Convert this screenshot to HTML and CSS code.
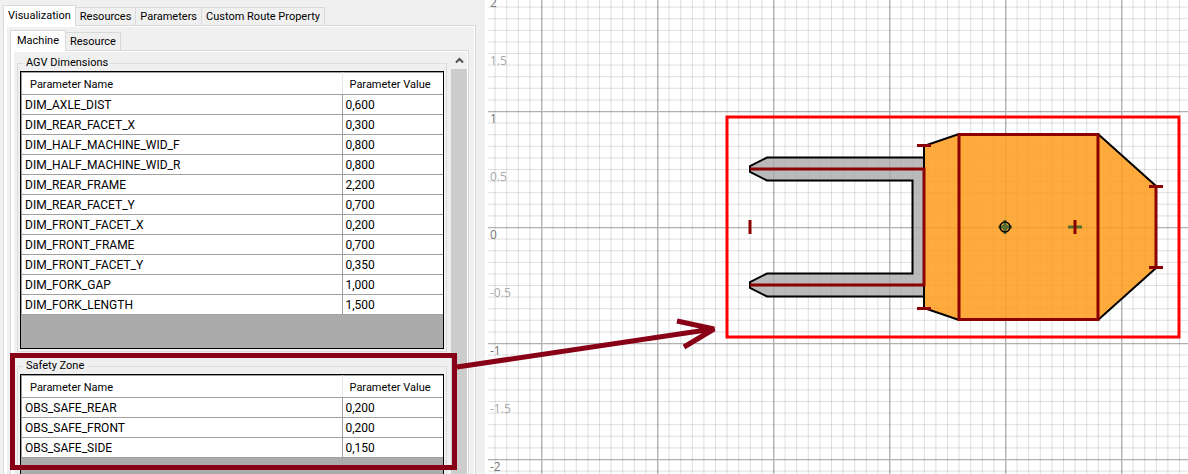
FILE: index.html
```html
<!DOCTYPE html>
<html lang="en">
<head>
<meta charset="utf-8">
<title>AGV parameters</title>
<link rel="stylesheet" href="styles.css">
</head>
<body>
<main class="app">
  <section class="panel">
    <div class="tabs" role="tablist">
      <button class="tab active" role="tab" aria-selected="true">Visualization</button>
      <button class="tab" role="tab">Resources</button>
      <button class="tab" role="tab">Parameters</button>
      <button class="tab" role="tab">Custom Route Property</button>
    </div>
    <div class="page">
      <div class="tabs sub" role="tablist">
        <button class="tab active" role="tab" aria-selected="true">Machine</button>
        <button class="tab" role="tab">Resource</button>
      </div>
      <div class="page inner">
        <div class="groups">
          <fieldset class="group">
            <legend>AGV Dimensions</legend>
            <div class="grid">
              <table>
                <thead><tr><th>Parameter Name</th><th class="val">Parameter Value</th></tr></thead>
                <tbody>
                  <tr><td>DIM_AXLE_DIST</td><td>0,600</td></tr>
                  <tr><td>DIM_REAR_FACET_X</td><td>0,300</td></tr>
                  <tr><td>DIM_HALF_MACHINE_WID_F</td><td>0,800</td></tr>
                  <tr><td>DIM_HALF_MACHINE_WID_R</td><td>0,800</td></tr>
                  <tr><td>DIM_REAR_FRAME</td><td>2,200</td></tr>
                  <tr><td>DIM_REAR_FACET_Y</td><td>0,700</td></tr>
                  <tr><td>DIM_FRONT_FACET_X</td><td>0,200</td></tr>
                  <tr><td>DIM_FRONT_FRAME</td><td>0,700</td></tr>
                  <tr><td>DIM_FRONT_FACET_Y</td><td>0,350</td></tr>
                  <tr><td>DIM_FORK_GAP</td><td>1,000</td></tr>
                  <tr><td>DIM_FORK_LENGTH</td><td>1,500</td></tr>
                </tbody>
              </table>
            </div>
          </fieldset>
          <fieldset class="group">
            <legend>Safety Zone</legend>
            <div class="grid">
              <table>
                <thead><tr><th>Parameter Name</th><th class="val">Parameter Value</th></tr></thead>
                <tbody>
                  <tr><td>OBS_SAFE_REAR</td><td>0,200</td></tr>
                  <tr><td>OBS_SAFE_FRONT</td><td>0,200</td></tr>
                  <tr><td>OBS_SAFE_SIDE</td><td>0,150</td></tr>
                </tbody>
              </table>
            </div>
          </fieldset>
        </div>
        <div class="scrollbar">
          <button class="up" aria-label="Scroll up"><svg width="9" height="7" viewBox="0 0 9 7"><path d="M1 5.500 4.500 2 8 5.500" fill="none" stroke="#505050" stroke-width="2"/></svg></button>
          <div class="thumb"></div>
        </div>
      </div>
    </div>
  </section>
  <section class="view">
    <svg class="plot" role="img" aria-label="Machine outline">
      <defs>
        <pattern id="mesh" x="53" y="111" width="116" height="116" patternUnits="userSpaceOnUse">
          <path d="M12.100 0V116M23.700 0V116M35.300 0V116M46.900 0V116M58.500 0V116M70.100 0V116M81.700 0V116M93.300 0V116M104.900 0V116M0 12.100H116M0 23.700H116M0 35.300H116M0 46.900H116M0 58.500H116M0 70.100H116M0 81.700H116M0 93.300H116M0 104.900H116" stroke="#000" stroke-opacity=".12"/>
          <path d="M.7 0V116M0 .5H116" stroke="#000" stroke-opacity=".3" stroke-width="1.400"/>
        </pattern>
      </defs>
      <rect width="100%" height="100%" fill="url(#mesh)"/>
      <g class="scale">
        <text x="2" y="7" class="major">2</text>
        <text x="2" y="65">1.5</text>
        <text x="2" y="123" class="major">1</text>
        <text x="2" y="181">0.5</text>
        <text x="2" y="239" class="major">0</text>
        <text x="2" y="297">-0.5</text>
        <text x="2" y="355" class="major">-1</text>
        <text x="2" y="413">-1.5</text>
        <text x="2" y="471" class="major">-2</text>
      </g>
      <g transform="translate(517 227)" fill="none">
        <path d="M-81-69.500H-238L-255-61V-55L-238-46.500H-92.500V46.500H-238L-255 55V61L-238 69.500H-81Z" fill="#a9a9a9" fill-opacity=".8" stroke="#000" stroke-width="2"/>
        <path d="M-81-81-46-93H93L151-41V41L93 93H-46L-81 81Z" fill="#ff9b1a" fill-opacity=".85" stroke="#000" stroke-width="2"/>
        <g stroke="#8b0000" stroke-width="3">
          <path d="M-255-58H-81V58H-255"/>
          <path d="M-46-92.500H93V92.500H-46Z"/>
          <path d="M151-41V41M144-40.500H158M144 40.500H158M-88-81.500H-74M-88 81.500H-74M-255-7V7"/>
        </g>
        <path d="M63 0H77M-6.500 0H7M0-7V7" stroke="#556b2f" stroke-width="3"/>
        <circle cx="0" cy="0" r="3" fill="#556b2f"/>
        <circle cx="0" cy="0" r="5" stroke="#000" stroke-width="1.500"/>
        <path d="M70-7V7" stroke="#8b0000" stroke-width="3"/>
        <rect x="-278" y="-110" width="452" height="220" stroke="#f00" stroke-width="3"/>
      </g>
    </svg>
  </section>
  <svg class="callout" aria-hidden="true">
    <g fill="none" stroke="#880015" stroke-width="5">
      <rect x="12.500" y="355.500" width="442" height="112"/>
      <path stroke-linejoin="bevel" d="M457 367 713 329M677 321 714 329 684 347"/>
    </g>
  </svg>
</main>
</body>
</html>
```
FILE: styles.css
```css
* { box-sizing: border-box; }
body {
  margin: 0;
  font: 11px/16px Roboto, sans-serif;
  color: #000;
  background: #fff;
}
.app { position: relative; display: flex; height: 100vh; overflow: hidden; }
.panel {
  flex: 0 0 485px;
  display: flex;
  flex-direction: column;
  padding: 5px 9px 0 3px;
  background: #f0f0f0;
}
.tabs { display: flex; align-items: flex-end; flex: none; }
.tab {
  height: 18px;
  padding: 1px 4px 0;
  border: 1px solid #d9d9d9;
  border-bottom: 0;
  border-left: 0;
  background: #f0f0f0;
  font: inherit;
  color: inherit;
  white-space: nowrap;
}
.tab.active {
  height: 21px;
  padding: 0 4px 1px;
  border-left: 1px solid #d9d9d9;
  background: #fff;
  margin-bottom: -1px;
  z-index: 1;
}
.sub .tab.active { padding: 0 6px 1px; }
.page {
  flex: 1;
  min-height: 0;
  display: flex;
  flex-direction: column;
  padding: 4px 6px 0 6px;
  border: 1px solid #d9d9d9;
  border-bottom: 0;
  background: #f0f0f0;
  box-shadow: inset 3px 0 #fff, inset -1px 1px #fff;
}
.page.inner { flex-direction: row; padding: 1px 1px 0 6px; }
.groups { flex: 1; min-width: 0; padding-top: 3px; }
.group {
  min-width: 0;
  margin: 0 4px 6px 0;
  padding: 0 2px 2px;
  border: 1px solid #dcdcdc;
}
.group legend { height: 16px; margin-left: 3px; padding: 0 3px; }
.grid { height: 278px; border: 1px solid #000; background: #ababab; }
table { width: 100%; border-collapse: collapse; table-layout: fixed; background: #fff; }
th, td {
  height: 20px;
  padding: 0 3px;
  border: 1px solid #a0a0a0;
  text-align: left;
  font-weight: normal;
  white-space: nowrap;
}
td { font-size: 12px; }
th { height: 22px; padding: 2px 8px 0; border-right-color: #e5e5e5; }
th.val { width: 101px; padding: 2px 7px 0; }
tr > :last-child { border-right: 0; }
.scrollbar { width: 16px; display: flex; flex-direction: column; }
.up {
  display: flex;
  align-items: center;
  justify-content: center;
  height: 17px;
  padding: 0;
  border: 0;
  background: #f0f0f0;
}
.thumb { flex: 1; background: #cdcdcd; }
.view { flex: 1; min-width: 0; padding-left: 3px; background: #fff; }
.plot { display: block; width: 100%; height: 100%; }
.scale { font: 12px "Open Sans", sans-serif; fill: #aaa; }
.major { fill: #777; }
.callout { position: absolute; inset: 0; width: 100%; height: 100%; pointer-events: none; }
```
